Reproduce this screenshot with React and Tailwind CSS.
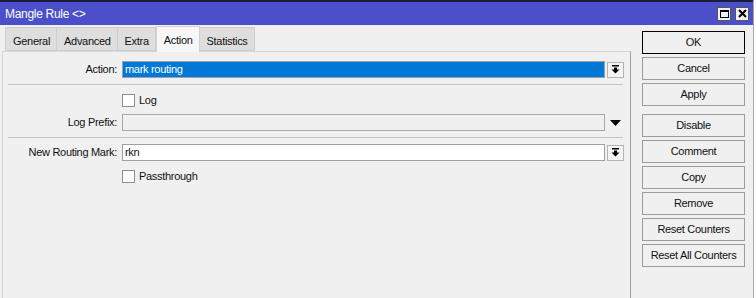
import React from "react";

const font = { fontFamily: '"Liberation Sans", Arial, sans-serif' };

const tabs = ["General", "Advanced", "Extra", "Action", "Statistics"];
const buttons = [
  ["OK", true],
  ["Cancel"],
  ["Apply"],
  null,
  ["Disable"],
  ["Comment"],
  ["Copy"],
  ["Remove"],
  ["Reset Counters"],
  ["Reset All Counters"],
];

function DropIcon() {
  return (
    <svg width="9" height="9" viewBox="0 0 9 9">
      <rect x="1" y="0" width="7" height="1.5" fill="#000" />
      <path d="M3 2.5h3v2h2.5L4.5 8.5 0.5 4.5H3z" fill="#000" />
    </svg>
  );
}

function DropButton() {
  return (
    <div className="w-[17px] h-[16px] ml-[2px] flex items-center justify-center border border-[#b4b4b4] bg-[#f4f4f4]">
      <DropIcon />
    </div>
  );
}

function Label({ children }) {
  return (
    <div className="w-[116px] shrink-0 text-right pr-[2px] text-[11px] tracking-[-0.3px] text-[#111]">
      {children}
    </div>
  );
}

function Check({ label }) {
  return (
    <div className="flex items-center h-[13px]">
      <div className="w-[116px] shrink-0" />
      <div className="ml-[3px] w-[13px] h-[13px] border border-[#8f8f8f] bg-white" />
      <span className="ml-[4px] text-[11px] tracking-[-0.3px] text-[#111]">{label}</span>
    </div>
  );
}

function Separator() {
  return <div className="ml-[5px] mr-[7px] h-px bg-[#c4c4c4]" />;
}

export default function App() {
  return (
    <div className="w-[756px] h-[298px] bg-white overflow-hidden" style={font}>
      <div className="w-[754px] h-[298px] bg-[#f0f0f0] border-r border-[#a9a9a9] flex flex-col">
        {/* title bar */}
        <div className="h-[25px] shrink-0 bg-[#4b4fc9] border-t-2 border-[#1c1c3c] flex items-center pl-[5px] pr-[4px]">
          <span className="text-white text-[12px] tracking-[-0.3px] leading-none">Mangle Rule &lt;&gt;</span>
          <div className="ml-auto flex gap-[4px]">
            <div className="w-[14px] h-[14px] bg-[#f0f0f0] border border-[#555] flex items-center justify-center">
              <div className="w-[9px] h-[8px] border border-black border-t-2" />
            </div>
            <div className="w-[14px] h-[14px] bg-[#f0f0f0] border border-[#555] flex items-center justify-center">
              <svg width="9" height="9" viewBox="0 0 9 9">
                <path d="M1 1l7 7M8 1L1 8" stroke="#000" strokeWidth="2" />
              </svg>
            </div>
          </div>
        </div>

        <div className="flex flex-1 min-h-0">
          {/* left: tabs and panel */}
          <div className="w-[631px] flex flex-col pl-[2px]">
            <div className="h-[26px] flex items-end pl-[3px]">
              {tabs.map((t) =>
                t === "Action" ? (
                  <div
                    key={t}
                    className="h-[26px] -mb-px z-10 pl-[7px] pr-[6px] pt-[5px] bg-[#f7f7f7] border border-b-0 border-[#d0d0d0] text-[11px] tracking-[-0.3px] text-[#111]"
                  >
                    {t}
                  </div>
                ) : (
                  <div
                    key={t}
                    className="h-[24px] pl-[7px] pr-[6px] pt-[5px] bg-[#dedede] border border-[#cfcfcf] -ml-px first:ml-0 text-[11px] tracking-[-0.3px] text-[#111]"
                  >
                    {t}
                  </div>
                )
              )}
            </div>
            <div className="flex-1 border border-b-0 border-l-[#d6d6d6] border-t-[#d6d6d6] border-r-[#a0a0a0] bg-[#f0f0f0] flex flex-col">
              <div className="mt-[9px] flex items-center">
                <Label>Action:</Label>
                <div className="ml-[3px] w-[483px] h-[17px] border border-[#a0a0a0] bg-[#0078d7] text-white text-[11px] tracking-[-0.3px] leading-[15px] pl-[2px]">
                  mark routing
                </div>
                <DropButton />
              </div>
              <div className="mt-[6px]">
                <Separator />
              </div>
              <div className="mt-[9px]">
                <Check label="Log" />
              </div>
              <div className="mt-[7px] flex items-center">
                <Label>Log Prefix:</Label>
                <div className="ml-[3px] w-[483px] h-[17px] border border-[#a9a9a9] bg-[#f0f0f0]" />
                <div className="w-[17px] ml-[2px] flex justify-center">
                  <svg width="11" height="6" viewBox="0 0 11 6">
                    <path d="M0 0h11L5.5 6z" fill="#000" />
                  </svg>
                </div>
              </div>
              <div className="mt-[6px]">
                <Separator />
              </div>
              <div className="mt-[6px] flex items-center">
                <Label>New Routing Mark:</Label>
                <div className="ml-[3px] w-[483px] h-[17px] border border-[#a0a0a0] bg-white text-[#111] text-[11px] tracking-[-0.3px] leading-[15px] pl-[2px]">
                  rkn
                </div>
                <DropButton />
              </div>
              <div className="mt-[9px]">
                <Check label="Passthrough" />
              </div>
            </div>
          </div>

          {/* right: buttons */}
          <div className="flex flex-col pl-[11px] pt-[6px]">
            {buttons.map((b, i) =>
              b === null ? (
                <div key={i} className="h-[5px]" />
              ) : (
                <div
                  key={i}
                  className={`w-[103px] h-[23px] mb-[3px] flex items-center justify-center text-[11px] tracking-[-0.3px] text-[#111] bg-[#f0f0f0] border ${
                    b[1] ? "border-black" : "border-[#9c9c9c]"
                  }`}
                >
                  {b[0]}
                </div>
              )
            )}
          </div>
        </div>
      </div>
    </div>
  );
}
